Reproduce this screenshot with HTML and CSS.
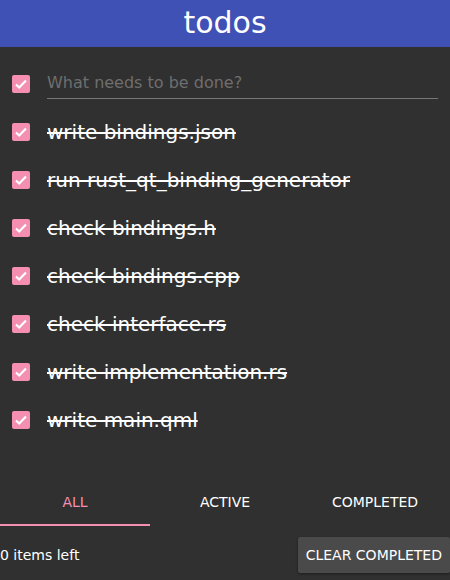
FILE: index.html
```html
<!DOCTYPE html>
<html lang="en">
<head>
    <meta charset="UTF-8">
    <title>todos</title>
    <link rel="stylesheet" href="styles.css">
</head>
<body>

    <div class="header">todos</div>

    <div class="new-todo">
        <span class="check"><svg viewBox="0 0 18 18"><path d="M4 9.5l3.2 3 6.8-7"/></svg></span>
        <input type="text" placeholder="What needs to be done?">
    </div>

    <ul class="todo-list">
        <li><span class="check"><svg viewBox="0 0 18 18"><path d="M4 9.5l3.2 3 6.8-7"/></svg></span><span class="label">write bindings.json</span></li>
        <li><span class="check"><svg viewBox="0 0 18 18"><path d="M4 9.5l3.2 3 6.8-7"/></svg></span><span class="label">run rust_qt_binding_generator</span></li>
        <li><span class="check"><svg viewBox="0 0 18 18"><path d="M4 9.5l3.2 3 6.8-7"/></svg></span><span class="label">check bindings.h</span></li>
        <li><span class="check"><svg viewBox="0 0 18 18"><path d="M4 9.5l3.2 3 6.8-7"/></svg></span><span class="label">check bindings.cpp</span></li>
        <li><span class="check"><svg viewBox="0 0 18 18"><path d="M4 9.5l3.2 3 6.8-7"/></svg></span><span class="label">check interface.rs</span></li>
        <li><span class="check"><svg viewBox="0 0 18 18"><path d="M4 9.5l3.2 3 6.8-7"/></svg></span><span class="label">write implementation.rs</span></li>
        <li><span class="check"><svg viewBox="0 0 18 18"><path d="M4 9.5l3.2 3 6.8-7"/></svg></span><span class="label">write main.qml</span></li>
    </ul>

    <div class="tabs">
        <a href="#" class="tab active">All</a>
        <a href="#" class="tab">Active</a>
        <a href="#" class="tab">Completed</a>
    </div>

    <div class="footer">
        <span class="count">0 items left</span>
        <button class="clear-btn">Clear Completed</button>
    </div>

</body>
</html>
```

FILE: styles.css
```css
body {
    font-family: "DejaVu Sans", sans-serif;
    margin: 0;
    padding: 0;
    background-color: #303030;
    color: #fff;
    width: 450px;
    height: 580px;
    overflow: hidden;
}

.header {
    background-color: #3f51b5;
    height: 47px;
    line-height: 46px;
    text-align: center;
    font-size: 30px;
}

.check {
    width: 18px;
    height: 18px;
    background-color: #f48fb1;
    border-radius: 2px;
    margin-left: 12px;
    margin-right: 17px;
    flex-shrink: 0;
    display: flex;
}

.check svg {
    width: 18px;
    height: 18px;
    fill: none;
    stroke: #fff;
    stroke-width: 2.2;
}

.new-todo {
    display: flex;
    align-items: center;
    height: 48px;
    margin-top: 13px;
}

.new-todo input {
    flex: 1;
    margin-right: 12px;
    background: transparent;
    border: none;
    border-bottom: 1px solid #777;
    color: #fff;
    font-family: inherit;
    font-size: 16px;
    padding: 2px 0 6px 0;
    margin-top: 1px;
    outline: none;
}

.new-todo input::placeholder {
    color: #6e6e6e;
}

.todo-list {
    list-style: none;
    margin: 0;
    padding: 0;
}

.todo-list li {
    display: flex;
    align-items: center;
    height: 48px;
}

.label {
    font-size: 20px;
    text-decoration: line-through;
}

.tabs {
    display: flex;
    margin-top: 34px;
}

.tab {
    width: 150px;
    height: 46px;
    line-height: 48px;
    text-align: center;
    text-transform: uppercase;
    font-size: 14px;
    color: #fff;
    text-decoration: none;
    border-bottom: 2px solid transparent;
}

.tab.active {
    color: #f48fb1;
    border-bottom-color: #f48fb1;
}

.footer {
    display: flex;
    justify-content: space-between;
    align-items: center;
    margin-top: 11px;
}

.count {
    font-size: 14px;
}

.clear-btn {
    background-color: #4a4a4a;
    color: #fff;
    border: none;
    border-radius: 2px;
    height: 36px;
    padding: 0 8px;
    font-family: inherit;
    font-size: 14px;
    text-transform: uppercase;
    box-shadow: 0 1px 3px rgba(0, 0, 0, 0.4);
}
```
